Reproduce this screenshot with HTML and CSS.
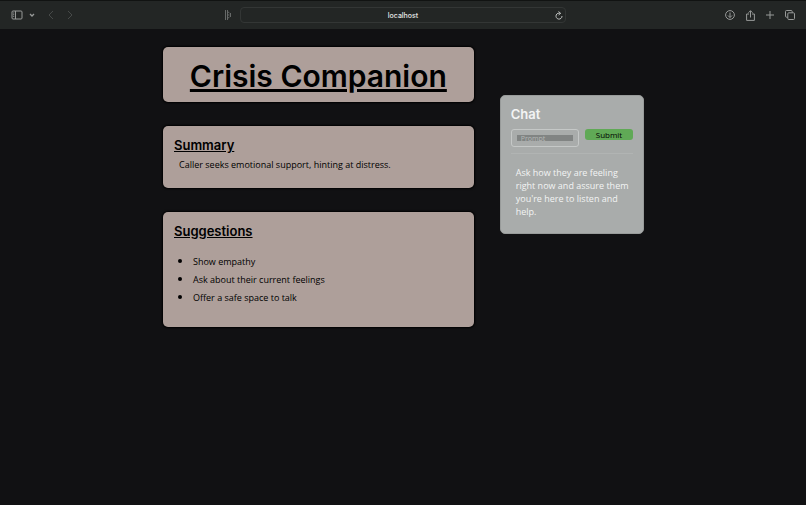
FILE: index.html
```
<!DOCTYPE html>
<html lang="en">
<head>
    <meta charset="UTF-8">
    <meta name="viewport" content="width=device-width, initial-scale=1.0">
    <title>Crisis Companion</title>
    <link rel="stylesheet" href="styles.css">
</head>
<body>
    <header class="toolbar">
        <div class="toolbar-left">
            <button class="icon-button sidebar-button" aria-label="Show sidebar">
                <svg width="12" height="10" viewBox="0 0 12 10"><rect x="1" y="1" width="10" height="8" rx="1"/><path d="M4.5 1v8M2.2 3h1M2.2 4.7h1M2.2 6.4h1"/></svg>
            </button>
            <button class="icon-button menu-button" aria-label="Tab groups">
                <svg width="6" height="4" viewBox="0 0 6 4"><path d="M1 1l2 2 2-2" stroke-width="1.3"/></svg>
            </button>
            <button class="icon-button back-button" aria-label="Back" disabled>
                <svg width="6" height="10" viewBox="0 0 6 10"><path d="M5 1L1 5l4 4"/></svg>
            </button>
            <button class="icon-button" aria-label="Forward" disabled>
                <svg width="6" height="10" viewBox="0 0 6 10"><path d="M1 1l4 4-4 4"/></svg>
            </button>
            <button class="icon-button extension-button" aria-label="Extension">
                <svg width="8" height="10" viewBox="0 0 8 10"><path d="M1.500 0v10M3.500 0v10M3.500 1.500l2 1.500M3.500 5h2M3.500 8.500l2-1.500M6.500 3v4"/></svg>
            </button>
        </div>
        <div class="address-bar">
            <span>localhost</span>
            <button class="icon-button reload-button" aria-label="Reload">
                <svg width="8" height="9" viewBox="0 0 8 9"><path d="M5.500 2.500A3 3 0 1 0 7 5M3.500 .5L5.600 2.300 3.600 4"/></svg>
            </button>
        </div>
        <div class="toolbar-right">
            <button class="icon-button" aria-label="Downloads">
                <svg width="10" height="10" viewBox="0 0 10 10"><circle cx="5" cy="5" r="4.400"/><path d="M5 2.500v5M3 5.500l2 2 2-2"/></svg>
            </button>
            <button class="icon-button" aria-label="Share">
                <svg width="9" height="11" viewBox="0 0 9 11"><path d="M3 4H.6v6.400h7.800V4H6M4.500 7.500V.8M2.500 2.700l2-2 2 2"/></svg>
            </button>
            <button class="icon-button" aria-label="New tab">
                <svg width="8" height="8" viewBox="0 0 8 8"><path d="M4 0v8M0 4h8"/></svg>
            </button>
            <button class="icon-button" aria-label="Tab overview">
                <svg width="10" height="10" viewBox="0 0 10 10"><rect x="2.800" y="2.800" width="6.700" height="6.700" rx="1"/><path d="M2.800 7.200H1.500a1 1 0 0 1-1-1V1.500a1 1 0 0 1 1-1h4.700a1 1 0 0 1 1 1v1.300"/></svg>
            </button>
        </div>
    </header>

    <main class="container">
        <div class="left-column">
            <div class="card title-card">
                <h1>Crisis Companion</h1>
            </div>
            <section class="card">
                <h2>Summary</h2>
                <p class="summary">Caller seeks emotional support, hinting at distress.</p>
            </section>
            <section class="card">
                <h2>Suggestions</h2>
                <ul class="suggestions">
                    <li>Show empathy</li>
                    <li>Ask about their current feelings</li>
                    <li>Offer a safe space to talk</li>
                </ul>
            </section>
        </div>

        <section class="chat">
            <h2>Chat</h2>
            <form class="chat-form">
                <div class="prompt-box">
                    <input type="text" id="prompt" placeholder="Prompt" aria-label="Prompt">
                </div>
                <button type="button" class="submit-button">Submit</button>
            </form>
            <p class="chat-response">Ask how they are feeling right now and assure them you're here to listen and help.</p>
        </section>
    </main>
</body>
</html>
```

FILE: styles.css
```
* {
    box-sizing: border-box;
}

body {
    margin: 0;
    min-height: 100vh;
    background-color: #111113;
    font-family: "Comic Sans MS", "Open Sans", sans-serif;
    font-size: 9px;
    color: #000;
}

h1,
h2,
p,
ul {
    margin: 0;
}

h1,
h2 {
    font-family: Inter, sans-serif;
    font-weight: 600;
}

/* Browser toolbar */
.toolbar {
    display: grid;
    grid-template-columns: 1fr 326px 1fr;
    align-items: center;
    height: 29px;
    border-top: 1px solid #111312;
    background-color: #232625;
}

.toolbar-left,
.toolbar-right {
    display: flex;
    align-items: center;
}

.toolbar-left {
    padding: 0 8px 0 11px;
}

.toolbar-right {
    justify-content: flex-end;
    gap: 11px;
    padding-right: 11px;
}

.icon-button {
    display: flex;
    padding: 0;
    border: none;
    background: none;
    color: #989a99;
    cursor: pointer;
}

.icon-button:disabled {
    color: #474a49;
}

.icon-button svg {
    fill: none;
    stroke: currentColor;
    stroke-width: 1;
}

.sidebar-button {
    margin-right: 6px;
}

.menu-button {
    margin-right: 13px;
}

.back-button {
    margin-right: 13px;
}

.extension-button {
    margin-left: auto;
    color: #666968;
}

.address-bar {
    display: grid;
    grid-template-columns: 1fr auto 1fr;
    align-items: center;
    height: 16px;
    padding: 0 2px;
    border: 1px solid #333635;
    border-radius: 4px;
    font-family: Inter, sans-serif;
    font-size: 7px;
    font-weight: 500;
    color: #e4e5e5;
}

.address-bar span {
    grid-column: 2;
}

.reload-button {
    justify-self: end;
    color: #c0c2c1;
}

/* Page content */
.container {
    display: grid;
    grid-template-columns: 28fr 13fr;
    align-items: start;
    gap: 26px;
    padding: 18px 162px 24px 163px;
}

.left-column {
    display: flex;
    flex-direction: column;
    gap: 24px;
}

.card {
    padding: 11px;
    border-radius: 5px;
    background-color: #ae9f9a;
    box-shadow: 0 0 2px 1px #000;
}

.card h2 {
    font-size: 13px;
    line-height: 16px;
    text-decoration: underline;
}

.title-card {
    padding: 8px 6px 5px;
    text-align: center;
}

.title-card h1 {
    font-size: 30px;
    line-height: 42px;
    text-decoration: underline;
}

.summary {
    padding: 3px 5px;
    line-height: 18px;
}

.suggestions {
    padding: 13px 0 10px 19px;
    line-height: 18px;
}

.suggestions li {
    height: 18px;
}

.suggestions li::marker {
    font-size: 11px;
}

.chat {
    margin-top: 48px;
    padding: 10px;
    border: 1px solid #989b9a;
    border-radius: 5px;
    background-color: #a9acab;
    color: #f3f4f4;
}

.chat h2 {
    font-size: 13px;
    line-height: 16px;
}

.chat-form {
    display: grid;
    grid-template-columns: 1fr 48px;
    align-items: start;
    gap: 6px;
    margin-top: 7px;
    padding-bottom: 6px;
    border-bottom: 1px solid #b1b4b3;
}

.prompt-box {
    padding: 5px;
    border: 1px solid #c5c8c7;
    border-radius: 3px;
}

.prompt-box input {
    display: block;
    width: 100%;
    height: 6px;
    padding: 0 4px;
    border: none;
    background-color: #818483;
    color: #fff;
    font-family: inherit;
    font-size: 7px;
}

.prompt-box input::placeholder {
    color: #b5b8b7;
}

.submit-button {
    height: 11px;
    padding: 0;
    border: none;
    border-radius: 3px;
    background-color: #60a956;
    color: #000;
    font-family: inherit;
    font-size: 8px;
    line-height: 11px;
    cursor: pointer;
}

.chat-response {
    padding: 12px 0 5px 5px;
    line-height: 13px;
}
```
